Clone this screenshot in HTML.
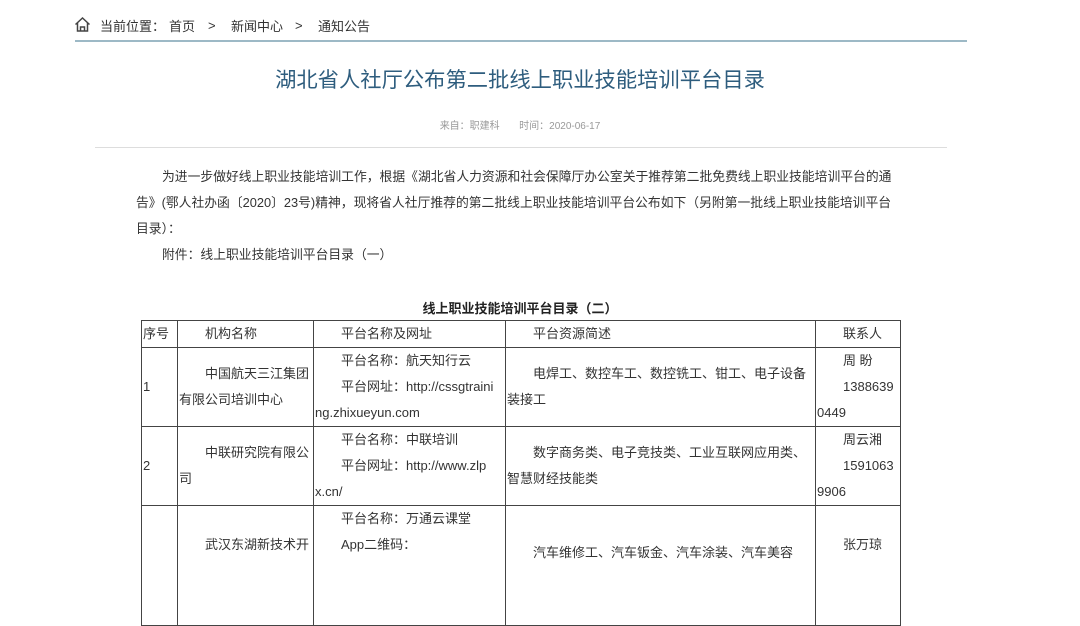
<!DOCTYPE html>
<html><head><meta charset="utf-8"><style>
body{margin:0;width:1080px;height:555px;overflow:hidden;background:#fff;font-family:"Liberation Sans","Noto Sans CJK SC",sans-serif;color:#333;position:relative}
.a{position:absolute;white-space:nowrap}
.bc{top:16px;font-size:13px;color:#333}
.hl{left:75px;top:40px;width:892px;height:2px;background:#9db9c6}
.t{left:0;width:1040px;top:63px;text-align:center;font-size:21.3px;color:#2e5d7e}
.m{left:0;width:1040px;top:117px;text-align:center;font-size:10px;color:#999}
.sl{left:95px;top:147px;width:852px;height:1px;background:#ddd}
.p{left:136px;top:164px;width:762px;font-size:12.8px;line-height:26px;white-space:normal;color:#333}
.p div{text-indent:26px}
.tt{left:0;width:1040px;top:298px;text-align:center;font-size:13px;font-weight:bold;color:#222}
table{position:absolute;left:141px;top:320px;border-collapse:collapse;font-size:13px;line-height:26px;color:#333;table-layout:fixed}
td{border:1px solid #444;padding:0 0 0 1px;vertical-align:middle;white-space:nowrap;overflow:hidden}
.i{text-indent:26px}
</style></head><body>
<svg class="a" style="left:74px;top:16px" width="17" height="17" viewBox="0 0 17 17"><path d="M1.5 8.5L8.5 2l7 6.5M3.5 7v8h10V7M6.5 15v-4h4v4" fill="none" stroke="#444" stroke-width="1.5"/></svg>
<div class="a bc" style="left:100px">当前位置：</div>
<div class="a bc" style="left:169px">首页</div>
<div class="a bc" style="left:208px;top:18px">&gt;</div>
<div class="a bc" style="left:231px">新闻中心</div>
<div class="a bc" style="left:295px;top:18px">&gt;</div>
<div class="a bc" style="left:318px">通知公告</div>
<div class="a hl"></div>
<div class="a t">湖北省人社厅公布第二批线上职业技能培训平台目录</div>
<div class="a m">来自：职建科&nbsp;&nbsp;&nbsp;&nbsp;&nbsp;&nbsp;&nbsp;时间：2020-06-17</div>
<div class="a sl"></div>
<div class="a p"><div>为进一步做好线上职业技能培训工作，根据《湖北省人力资源和社会保障厅办公室关于推荐第二批免费线上职业技能培训平台的通告》(鄂人社办函〔2020〕23号)精神，现将省人社厅推荐的第二批线上职业技能培训平台公布如下（另附第一批线上职业技能培训平台<br style="">目录）：</div><div>附件：线上职业技能培训平台目录（一）</div></div>
<div class="a tt">线上职业技能培训平台目录（二）</div>
<table>
<colgroup><col style="width:36px"><col style="width:136px"><col style="width:192px"><col style="width:310px"><col style="width:85px"></colgroup>
<tr style="height:27px"><td>序号</td><td class="i">机构名称</td><td class="i">平台名称及网址</td><td class="i">平台资源简述</td><td class="i">联系人</td></tr>
<tr style="height:79px"><td>1</td><td><div class="i">中国航天三江集团</div>有限公司培训中心</td><td><div class="i">平台名称：航天知行云</div><div class="i">平台网址：http://cssgtraini</div>ng.zhixueyun.com</td><td><div class="i">电焊工、数控车工、数控铣工、钳工、电子设备</div>装接工</td><td><div class="i">周 盼</div><div class="i">1388639</div>0449</td></tr>
<tr style="height:79px"><td>2</td><td><div class="i">中联研究院有限公</div>司</td><td><div class="i">平台名称：中联培训</div><div class="i">平台网址：http://www.zlp</div>x.cn/</td><td><div class="i">数字商务类、电子竞技类、工业互联网应用类、</div>智慧财经技能类</td><td><div class="i">周云湘</div><div class="i">1591063</div>9906</td></tr>
<tr style="height:120px"><td style="vertical-align:top"></td><td style="vertical-align:top;padding-top:26px"><div class="i">武汉东湖新技术开</div></td><td style="vertical-align:top"><div class="i">平台名称：万通云课堂</div><div class="i">App二维码：</div></td><td style="vertical-align:top;padding-top:34px"><div class="i">汽车维修工、汽车钣金、汽车涂装、汽车美容</div></td><td style="vertical-align:top;padding-top:26px"><div class="i">张万琼</div></td></tr>
</table>
</body></html>
